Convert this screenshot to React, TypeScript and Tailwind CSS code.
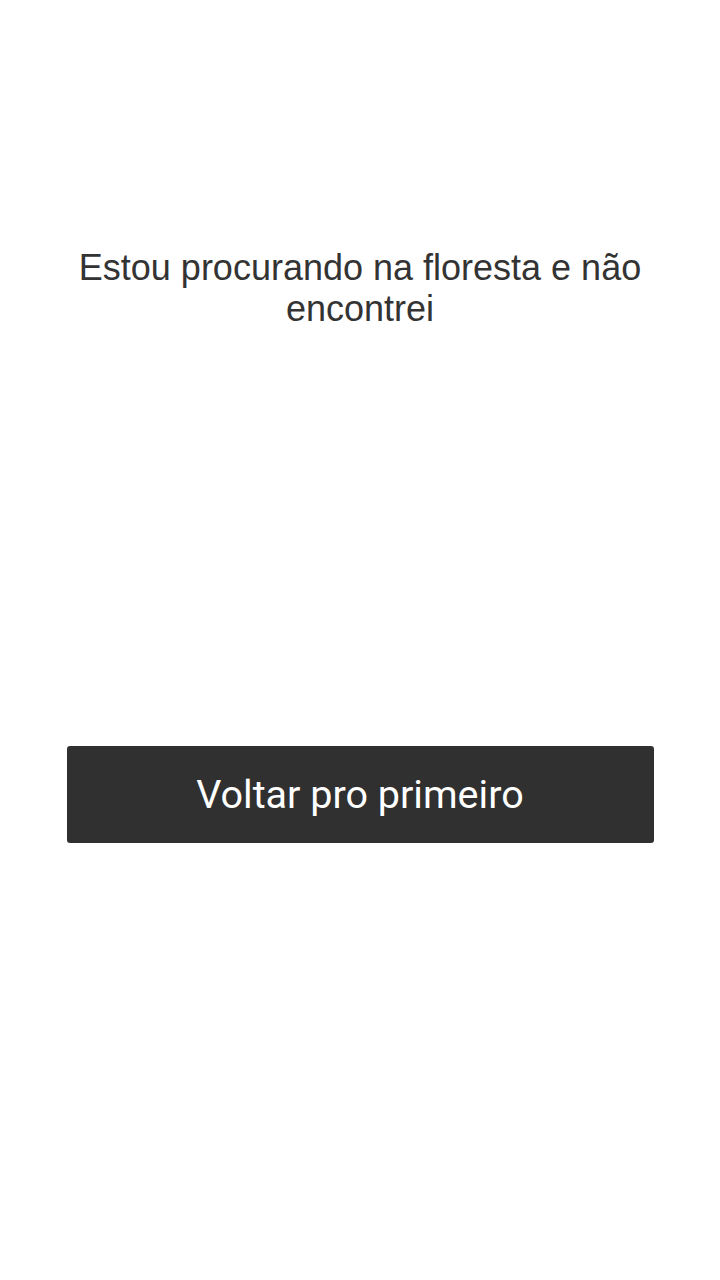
export default function App() {
  return (
    <div className="w-[720px] h-[1280px] bg-white flex flex-col items-center">
      <h1 className="mt-[247px] w-[600px] text-center text-[36px] leading-[41px] text-[#333333] font-['Liberation_Sans',Arial,sans-serif]">
        Estou procurando na floresta e não encontrei
      </h1>
      <button className="mt-[417px] w-[587px] h-[97px] bg-[#303030] rounded-[3px] text-white text-[39.5px] font-['Roboto',sans-serif]">
        Voltar pro primeiro
      </button>
    </div>
  );
}
